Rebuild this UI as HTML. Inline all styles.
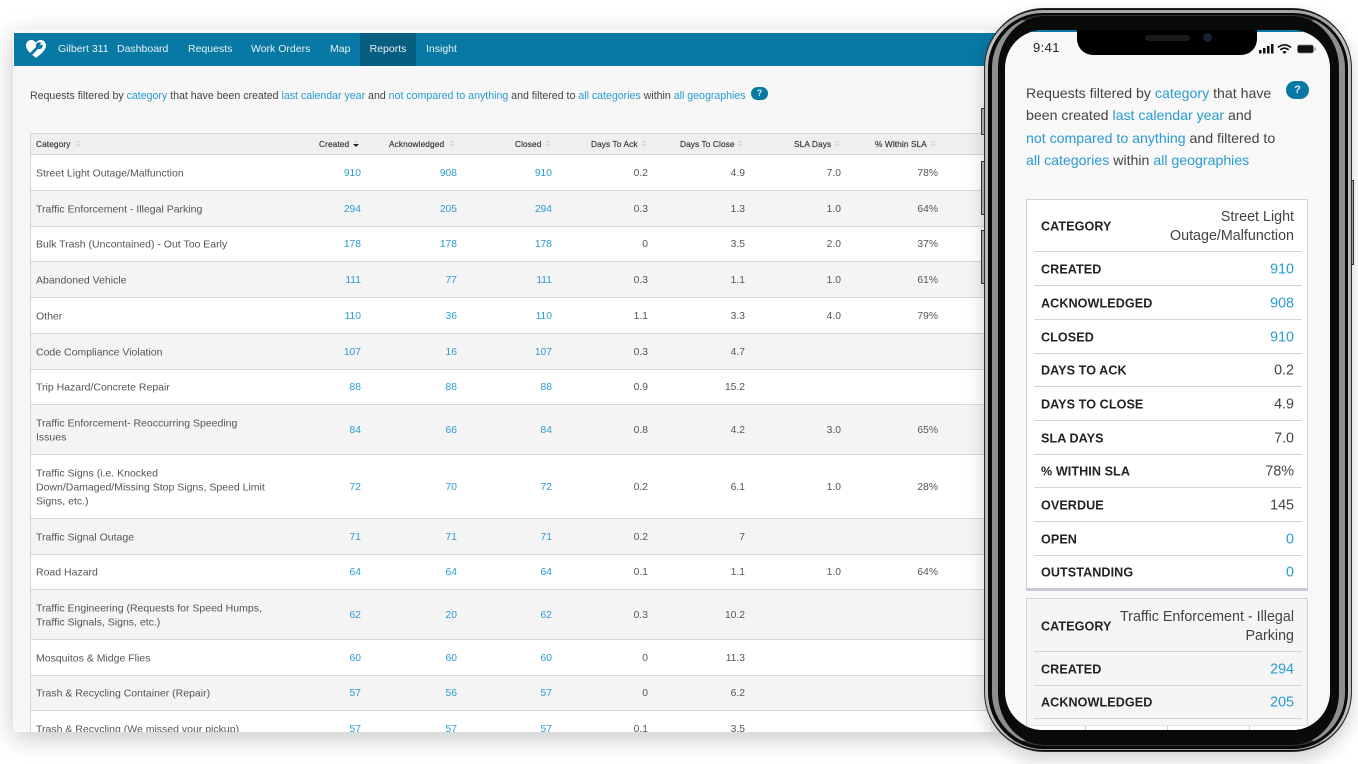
<!DOCTYPE html>
<html><head><meta charset="utf-8"><title>Gilbert 311 Reports</title>
<style>
html,body{margin:0;padding:0;background:#fff}
#p{position:relative;width:1358px;height:764px;overflow:hidden;background:#fff;font-family:"Liberation Sans",sans-serif;filter:blur(.3px)}
#b{position:absolute;left:13px;top:29px;width:990px;height:703px;background:#f7f7f7;overflow:hidden;box-shadow:0 6px 24px rgba(0,0,0,.22);border-radius:2px}
#p>.nav{position:absolute;left:14px;top:33px;width:990px;height:33px;background:#0878a5}
.nav span{position:absolute;top:0;line-height:33px;color:#e9f2f6;font-size:10.5px;white-space:nowrap}
.nav .on{background:#065f80;left:346px;width:56px;height:33px;text-align:center}
.intro{position:absolute;left:30px;top:88px;font-size:10.6px;line-height:14px;color:#444;white-space:nowrap}
a{color:#2a9bd0;text-decoration:none}
.help{position:absolute;background:#0878a5;color:#dfeef5;border-radius:9px;text-align:center;font-weight:bold}
#t{position:absolute;left:30px;top:133px;width:960px;height:599px;overflow:hidden;border-left:1px solid #d4d4de;box-sizing:border-box}
.h{position:absolute;left:0;top:0;width:100%;height:22px;background:#efefef;border-top:1px solid #d4d4dc;border-bottom:1px solid #d4d4dc;box-sizing:border-box}
.h b{position:absolute;top:0;line-height:20px;font-size:8.3px;letter-spacing:.1px;font-weight:normal;color:#333;white-space:nowrap;-webkit-text-stroke:.15px #333}
.h i{position:absolute;top:6px;width:6px;height:8px}
.h i:before,.h i:after{content:"";position:absolute;left:0;border-left:3px solid transparent;border-right:3px solid transparent}
.h i:before{top:0;border-bottom:3px solid #dcdcdc}
.h i:after{top:4px;border-top:3px solid #dcdcdc}
.h i.d:after{border-top-color:#222}
.r{position:absolute;left:0;width:100%;box-sizing:border-box;border-bottom:1px solid #d6d6e0;font-size:10.3px;color:#555}
.r.g{background:#f4f4f4}.r.w{background:#fff}
.r div{position:absolute;top:50%;transform:translateY(calc(-50% + .5px));white-space:nowrap}
.r .n{left:5px;width:232px;white-space:normal;line-height:14px;font-size:10.5px}
.r .x{text-align:right;color:#555}
.c1{right:629px}.c2{right:533px}.c3{right:438px}.c4{right:342px}.c5{right:245px}.c6{right:149px}.c7{right:52px}
.r div.l{color:#2a9bd0}
#ph{position:absolute;left:984px;top:8px;width:368px;height:744px;border-radius:60px;background:#0a0a0a;box-shadow:0 8px 18px rgba(0,0,0,.18);box-sizing:border-box;border:1.5px solid #2a2a2a}
#ph:before{content:"";position:absolute;left:0;top:.5px;right:0;bottom:1px;border-radius:58px;border:3.5px solid #bdbdbd;border-top-color:#a8a8a8;border-bottom-color:#a0a0a0;border-bottom-width:1.5px;box-sizing:border-box}
#ph:after{content:"";position:absolute;left:6.5px;top:5.5px;right:6.5px;bottom:5px;border-radius:53px;border:6px solid #8f8f8f;border-top-color:#333;border-bottom-color:#333;border-top-width:1px;border-bottom-width:1px;box-sizing:border-box}
.btn{position:absolute;width:3px;background:#b5b5b5;border:1px solid #333;border-width:1px 0 1px 1px;box-sizing:border-box}
#s{position:absolute;left:1005px;top:30px;width:325px;height:700px;border-radius:38px;overflow:hidden;background:#f8f8f8;color:#333}
#s .top{position:absolute;left:0;top:0;width:100%;height:2px;background:#0878a5}
#s .notch{position:absolute;left:72px;top:0;width:180px;height:25px;background:#000;border-radius:0 0 16px 16px}
.time{position:absolute;left:28px;top:10px;font-size:13px;color:#222;letter-spacing:.4px}
.pt{position:absolute;left:21px;top:51.500px;width:280px;font-size:14.15px;line-height:22.6px;color:#444;white-space:nowrap}
.card{position:absolute;left:21px;width:282px;box-sizing:border-box;border:1px solid #d2d2de}
.card .k{position:absolute;left:7px;width:268px;border-bottom:1px solid #d3d3de;box-sizing:border-box}
.k b{position:absolute;left:7px;top:50%;transform:translateY(calc(-50% + .5px));font-size:12.6px;color:#222;white-space:nowrap;letter-spacing:.07px}
.k span{position:absolute;right:8px;top:50%;transform:translateY(calc(-50% + 1px));font-size:14.3px;line-height:19px;text-align:right;color:#444;white-space:nowrap}
.k span.l{color:#2a9bd0}
</style></head><body><div id="p">
<div id="b"></div>
<div class="nav">
<svg style="position:absolute;left:11px;top:6px" width="22" height="20" viewBox="0 0 22 20"><path d="M11 19C7 15.500 1 11.500 1 6.500 1 3.300 3.500 1 6.200 1 8.200 1 9.900 2 11 3.800 12.100 2 13.800 1 15.800 1 18.500 1 21 3.300 21 6.500 21 11.500 15 15.500 11 19Z" fill="#fff"/><path d="M6.500 14.500L12 9" stroke="#0878a5" stroke-width="2.800" stroke-linecap="round"/><circle cx="14.300" cy="6.700" r="3.400" fill="#0878a5"/><path d="M14.600 6.400L17 2.800 19 5Z" fill="#fff"/></svg>
<span style="left:44px">Gilbert 311</span><span style="left:103px">Dashboard</span><span style="left:174px">Requests</span><span style="left:237px">Work Orders</span><span style="left:316px">Map</span><span class="on">Reports</span><span style="left:412px">Insight</span></div>
<div class="intro" style="top:88.500px">Requests filtered by <a>category</a> that have been created <a>last calendar year</a> and <a>not compared to anything</a> and filtered to <a>all categories</a> within <a>all geographies</a></div>
<div class="help" style="left:751px;top:87px;width:17px;height:13px;font-size:9px;line-height:13px">?</div>
<div id="t">
<div class="h"><b style="left:5px">Category</b><i style="left:44px"></i><b style="left:288px">Created</b><i class="d" style="left:322px"></i><b style="left:358px">Acknowledged</b><i style="left:418px"></i><b style="left:484px">Closed</b><i style="left:514px"></i><b style="left:560px">Days To Ack</b><i style="left:610px"></i><b style="left:649px">Days To Close</b><i style="left:706px"></i><b style="left:763px">SLA Days</b><i style="left:803px"></i><b style="left:844px">% Within SLA</b><i style="left:899px"></i></div>
<div class="r w" style="top:22px;height:36px"><div class="n">Street Light Outage/Malfunction</div><div class="l c1">910</div><div class="l c2">908</div><div class="l c3">910</div><div class="x c4">0.2</div><div class="x c5">4.9</div><div class="x c6">7.0</div><div class="x c7">78%</div></div>
<div class="r g" style="top:58px;height:36px"><div class="n">Traffic Enforcement - Illegal Parking</div><div class="l c1">294</div><div class="l c2">205</div><div class="l c3">294</div><div class="x c4">0.3</div><div class="x c5">1.3</div><div class="x c6">1.0</div><div class="x c7">64%</div></div>
<div class="r w" style="top:94px;height:35px"><div class="n">Bulk Trash (Uncontained) - Out Too Early</div><div class="l c1">178</div><div class="l c2">178</div><div class="l c3">178</div><div class="x c4">0</div><div class="x c5">3.5</div><div class="x c6">2.0</div><div class="x c7">37%</div></div>
<div class="r g" style="top:129px;height:36px"><div class="n">Abandoned Vehicle</div><div class="l c1">111</div><div class="l c2">77</div><div class="l c3">111</div><div class="x c4">0.3</div><div class="x c5">1.1</div><div class="x c6">1.0</div><div class="x c7">61%</div></div>
<div class="r w" style="top:165px;height:36px"><div class="n">Other</div><div class="l c1">110</div><div class="l c2">36</div><div class="l c3">110</div><div class="x c4">1.1</div><div class="x c5">3.3</div><div class="x c6">4.0</div><div class="x c7">79%</div></div>
<div class="r g" style="top:201px;height:36px"><div class="n">Code Compliance Violation</div><div class="l c1">107</div><div class="l c2">16</div><div class="l c3">107</div><div class="x c4">0.3</div><div class="x c5">4.7</div></div>
<div class="r w" style="top:237px;height:35px"><div class="n">Trip Hazard/Concrete Repair</div><div class="l c1">88</div><div class="l c2">88</div><div class="l c3">88</div><div class="x c4">0.9</div><div class="x c5">15.2</div></div>
<div class="r g" style="top:272px;height:50px"><div class="n">Traffic Enforcement- Reoccurring Speeding<br>Issues</div><div class="l c1">84</div><div class="l c2">66</div><div class="l c3">84</div><div class="x c4">0.8</div><div class="x c5">4.2</div><div class="x c6">3.0</div><div class="x c7">65%</div></div>
<div class="r w" style="top:322px;height:64px"><div class="n">Traffic Signs (i.e. Knocked<br>Down/Damaged/Missing Stop Signs, Speed Limit<br>Signs, etc.)</div><div class="l c1">72</div><div class="l c2">70</div><div class="l c3">72</div><div class="x c4">0.2</div><div class="x c5">6.1</div><div class="x c6">1.0</div><div class="x c7">28%</div></div>
<div class="r g" style="top:386px;height:36px"><div class="n">Traffic Signal Outage</div><div class="l c1">71</div><div class="l c2">71</div><div class="l c3">71</div><div class="x c4">0.2</div><div class="x c5">7</div></div>
<div class="r w" style="top:422px;height:35px"><div class="n">Road Hazard</div><div class="l c1">64</div><div class="l c2">64</div><div class="l c3">64</div><div class="x c4">0.1</div><div class="x c5">1.1</div><div class="x c6">1.0</div><div class="x c7">64%</div></div>
<div class="r g" style="top:457px;height:50px"><div class="n">Traffic Engineering (Requests for Speed Humps,<br>Traffic Signals, Signs, etc.)</div><div class="l c1">62</div><div class="l c2">20</div><div class="l c3">62</div><div class="x c4">0.3</div><div class="x c5">10.2</div></div>
<div class="r w" style="top:507px;height:36px"><div class="n">Mosquitos &amp; Midge Flies</div><div class="l c1">60</div><div class="l c2">60</div><div class="l c3">60</div><div class="x c4">0</div><div class="x c5">11.3</div></div>
<div class="r g" style="top:543px;height:35px"><div class="n">Trash &amp; Recycling Container (Repair)</div><div class="l c1">57</div><div class="l c2">56</div><div class="l c3">57</div><div class="x c4">0</div><div class="x c5">6.2</div></div>
<div class="r w" style="top:578px;height:36px"><div class="n">Trash &amp; Recycling (We missed your pickup)</div><div class="l c1">57</div><div class="l c2">57</div><div class="l c3">57</div><div class="x c4">0.1</div><div class="x c5">3.5</div></div>
</div>
<div class="btn" style="left:981px;top:108px;height:27px"></div>
<div class="btn" style="left:981px;top:161px;height:54px"></div>
<div class="btn" style="left:981px;top:230px;height:54px"></div>
<div class="btn" style="left:1351px;top:180px;height:85px;transform:scaleX(-1)"></div>
<div id="ph"></div>
<div id="s">
<div class="top"></div><div class="notch"><div style="position:absolute;left:68px;top:5px;width:45px;height:6px;border-radius:3px;background:#1a1a1a"></div><div style="position:absolute;left:126px;top:3px;width:9px;height:9px;border-radius:5px;background:#152238"></div></div>
<div class="time">9:41</div>
<svg style="position:absolute;left:254px;top:13px" width="62" height="12" viewBox="0 0 62 12"><rect x="0" y="7" width="2.500" height="3.500" fill="#111"/><rect x="4" y="5" width="2.500" height="5.500" fill="#111"/><rect x="8" y="3" width="2.500" height="7.500" fill="#111"/><rect x="12" y="1" width="2.500" height="9.500" fill="#111"/><path d="M19 4.500a9.500 9.500 0 0 1 13 0M21.300 6.900a6 6 0 0 1 8.400 0" fill="none" stroke="#111" stroke-width="1.600"/><path d="M25.500 11L23.300 8.900a3 3 0 0 1 4.400 0Z" fill="#111"/><rect x="38.500" y="2" width="16" height="8" rx="2" fill="#111" stroke="#888" stroke-width=".8"/><rect x="55.500" y="4.500" width="1.200" height="3" fill="#888"/></svg>
<div class="pt">Requests filtered by <a>category</a> that have<br>been created <a>last calendar year</a> and<br><a>not compared to anything</a> and filtered to<br><a>all categories</a> within <a>all geographies</a></div>
<div class="help" style="left:281px;top:51px;width:23px;height:18px;font-size:11px;line-height:18px">?</div>
<div class="card" style="top:169px;height:392px;background:#fff;border-bottom:3px solid #c9c7da">
<div class="k" style="top:1px;height:51px"><b>CATEGORY</b><span>Street Light<br>Outage/Malfunction</span></div>
<div class="k" style="top:52px;height:34px"><b>CREATED</b><span class="l">910</span></div>
<div class="k" style="top:86px;height:34px"><b>ACKNOWLEDGED</b><span class="l">908</span></div>
<div class="k" style="top:120px;height:34px"><b>CLOSED</b><span class="l">910</span></div>
<div class="k" style="top:154px;height:33px"><b>DAYS TO ACK</b><span>0.2</span></div>
<div class="k" style="top:187px;height:34px"><b>DAYS TO CLOSE</b><span>4.9</span></div>
<div class="k" style="top:221px;height:34px"><b>SLA DAYS</b><span>7.0</span></div>
<div class="k" style="top:255px;height:33px"><b>% WITHIN SLA</b><span>78%</span></div>
<div class="k" style="top:288px;height:34px"><b>OVERDUE</b><span>145</span></div>
<div class="k" style="top:322px;height:34px"><b>OPEN</b><span class="l">0</span></div>
<div class="k" style="top:356px;height:32px;border:0"><b>OUTSTANDING</b><span class="l">0</span></div>
</div>
<div class="card" style="top:568px;height:140px;background:#f5f5f5">
<div class="k" style="top:1px;height:52px"><b>CATEGORY</b><span>Traffic Enforcement - Illegal<br>Parking</span></div>
<div class="k" style="top:53px;height:34px"><b>CREATED</b><span class="l">294</span></div>
<div class="k" style="top:87px;height:33px"><b>ACKNOWLEDGED</b><span class="l">205</span></div>
</div>
<div style="position:absolute;left:0;top:695px;width:325px;height:5px;background:#fff;border-top:1px solid #e4e4e8"><div style="position:absolute;left:80px;top:0;width:1px;height:5px;background:#ccc"></div><div style="position:absolute;left:162px;top:0;width:1px;height:5px;background:#ccc"></div><div style="position:absolute;left:244px;top:0;width:1px;height:5px;background:#ccc"></div></div>
</div>
</div></body></html>
